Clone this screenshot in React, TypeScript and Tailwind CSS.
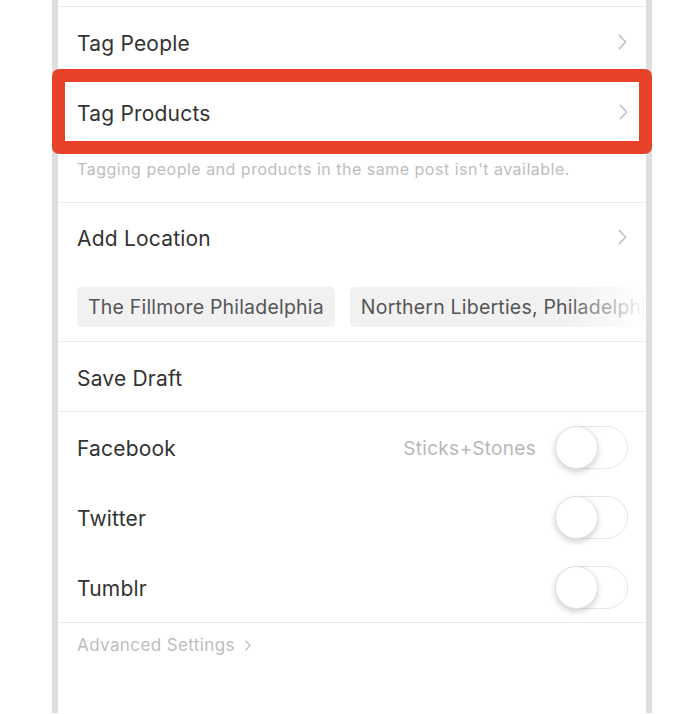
import React from 'react';

const font = { fontFamily: 'Inter, "Noto Sans", sans-serif' };

function Chevron({ className = '' }: { className?: string }) {
  return (
    <svg viewBox="0 0 10 18" className={className} fill="none">
      <path d="M1.5 1.5 8.5 9l-7 7.5" stroke="currentColor" strokeWidth="2" strokeLinecap="round" strokeLinejoin="round" />
    </svg>
  );
}

function Toggle() {
  return (
    <div className="relative w-[73px] h-[43px] rounded-full border border-[#e6e6e6] bg-white">
      <div className="absolute -left-[1px] -top-[1px] w-[43px] h-[43px] rounded-full bg-white border border-[#e2e2e2] shadow-[0_3px_6px_rgba(0,0,0,0.18)]" />
    </div>
  );
}

function NavRow({ label }: { label: string }) {
  return (
    <div className="flex items-center justify-between pl-[19px] pr-[19px] pt-[4px] h-full">
      <span className="text-[21px] tracking-[0.2px] text-[#333]">{label}</span>
      <Chevron className="w-[9px] h-[16px] text-[#c4c4c8] -mt-[4px]" />
    </div>
  );
}

function ShareRow({ label, account }: { label: string; account?: string }) {
  return (
    <div className="flex items-center h-[70px] pl-[19px] pr-[18px]">
      <span className="text-[21px] tracking-[0.2px] text-[#333] flex-1 pt-[4px]">{label}</span>
      {account && <span className="text-[19px] tracking-[0.3px] text-[#b8b8b8] mr-[19px] pt-[4px]">{account}</span>}
      <Toggle />
    </div>
  );
}

export default function App() {
  return (
    <div className="w-[692px] h-[714px] bg-white overflow-hidden" style={font}>
      <div className="ml-[52px] w-[600px] h-[713px] border-x-[6px] border-[#dedede] flex flex-col">
        <div className="h-[7px] border-b border-[#ececec]" />

        <div className="h-[62px] pt-[8px]">
          <NavRow label="Tag People" />
        </div>

        <div className="-mx-[6px] h-[85px] border-[13px] border-[#e8432a] rounded-[7px] bg-white">
          <div className="flex items-center justify-between h-full pl-[12px] pr-[11px]">
            <span className="text-[21px] tracking-[0.2px] text-[#333] pt-[4px]">Tag Products</span>
            <Chevron className="w-[9px] h-[16px] text-[#c4c4c8]" />
          </div>
        </div>

        <div className="h-[49px] pt-[6px] pl-[19px] border-b border-[#ececec]">
          <p className="text-[16px] tracking-[0.5px] leading-[18px] text-[#bdbdbd] whitespace-nowrap">
            Tagging people and products in the same post isn't available.
          </p>
        </div>

        <div className="border-b border-[#ececec]">
          <div className="h-[68px]">
            <NavRow label="Add Location" />
          </div>
          <div className="relative flex gap-[15px] pl-[19px] pt-[16px] pb-[14px] overflow-hidden whitespace-nowrap">
            <span className="h-[40px] flex items-center px-[11px] pt-[2px] rounded-[5px] bg-[#f1f1f1] text-[19.5px] tracking-[0.2px] text-[#555]">
              The Fillmore Philadelphia
            </span>
            <span className="h-[40px] flex items-center px-[11px] pt-[2px] rounded-[5px] bg-[#f1f1f1] text-[19.5px] tracking-[0.2px] text-[#555]">
              Northern Liberties, Philadelphia
            </span>
            <div className="absolute right-0 top-0 bottom-0 w-[80px] bg-gradient-to-r from-white/0 to-white" />
          </div>
        </div>

        <div className="h-[70px] flex items-center pl-[19px] pt-[4px] border-b border-[#ececec]">
          <span className="text-[21px] tracking-[0.2px] text-[#333]">Save Draft</span>
        </div>

        <ShareRow label="Facebook" account="Sticks+Stones" />
        <ShareRow label="Twitter" />
        <div className="border-b border-[#ececec]">
          <ShareRow label="Tumblr" />
        </div>

        <div className="pt-[13px] pl-[19px] flex items-center gap-[10px]">
          <span className="text-[17px] tracking-[0.4px] leading-[18px] text-[#bdbdbd]">Advanced Settings</span>
          <Chevron className="w-[6px] h-[11px] text-[#bdbdbd]" />
        </div>
      </div>
    </div>
  );
}
